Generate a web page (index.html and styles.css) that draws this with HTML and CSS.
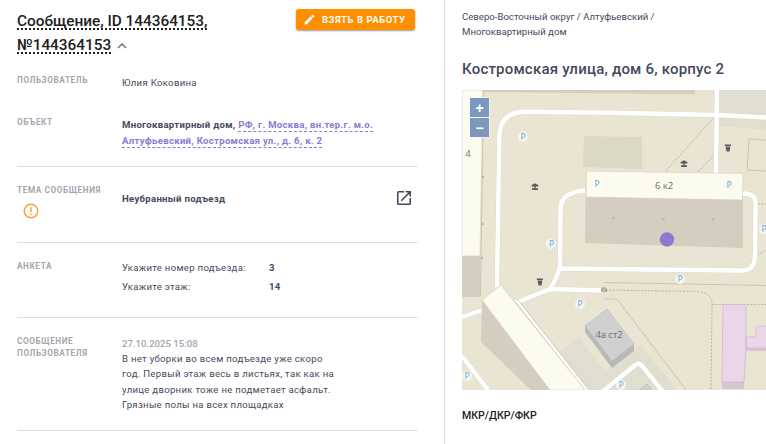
FILE: index.html
```html
<!DOCTYPE html>
<html lang="ru">
  <head>
    <meta charset="UTF-8" />
    <meta name="viewport" content="width=device-width, initial-scale=1.0" />
    <title>Сообщение, ID 144364153</title>
    <link rel="stylesheet" href="styles.css">
  </head>
  <body>
    <main class="page">
      <section class="message">
        <header class="message-header">
          <h1 class="message-title">
            <span>Сообщение, ID 144364153,<br>№144364153</span>
            <svg class="chevron" viewBox="0 0 10 6"><path d="M1 5 L5 1 L9 5" /></svg>
          </h1>
          <button class="take-button">
            <svg viewBox="0 0 24 24"><path d="M3 17.2V21h3.8L17.8 9.9l-3.7-3.7zM20.7 7a1 1 0 0 0 0-1.4l-2.3-2.3a1 1 0 0 0-1.4 0l-1.9 1.8 3.8 3.8z" /></svg>
            <span>Взять в работу</span>
          </button>
        </header>

        <div class="row row-user">
          <div class="label">Пользователь</div>
          <div class="value">Юлия Коковина</div>
        </div>
        <div class="row row-object">
          <div class="label">Объект</div>
          <div class="value strong">Многоквартирный дом, <a class="address" href="#">РФ, г. Москва, вн.тер.г. м.о.<br>Алтуфьевский, Костромская ул., д. 6, к. 2</a></div>
        </div>
        <div class="row row-theme">
          <div class="label">
            Тема сообщения
            <svg class="alert" viewBox="0 0 16 16"><circle cx="8" cy="8" r="6.8" /><path d="M8 4V9M8 10.4V12" /></svg>
          </div>
          <div class="value strong">Неубранный подъезд</div>
          <svg class="open" viewBox="3 3 18 18"><path d="M19 19H5V5h7V3H5a2 2 0 0 0-2 2v14a2 2 0 0 0 2 2h14a2 2 0 0 0 2-2v-7h-2zM14 3v2h3.6l-9.8 9.8 1.4 1.4L19 6.4V10h2V3z" /></svg>
        </div>
        <div class="row row-form">
          <div class="label">Анкета</div>
          <div class="value form">
            <span>Укажите номер подъезда:</span><b>3</b>
            <span>Укажите этаж:</span><b>14</b>
          </div>
        </div>
        <div class="row row-text">
          <div class="label">Сообщение<br>пользователя</div>
          <div class="value">
            <div class="date">27.10.2025 15:08</div>
            <div class="text">В нет уборки во всем подъезде уже скоро<br>год. Первый этаж весь в листьях, так как на<br>улице дворник тоже не подметает асфальт.<br>Грязные полы на всех площадках</div>
          </div>
        </div>
      </section>

      <aside class="place">
        <div class="crumbs">Северо-Восточный округ / Алтуфьевский /<br>Многоквартирный дом</div>
        <h2 class="place-title">Костромская улица, дом 6, корпус 2</h2>
        <div class="map">
          <svg class="map-canvas" viewBox="0 0 304 300">
            <defs>
              <g id="pavilion"><path d="M-3.500 -.5V-1.800L0 -3.800L3.500 -1.800V-.5zM-.7 -1H.7V2H-.7zM-3 1.200H3V3H-3z" /></g>
              <g id="bin"><path d="M-3.200 -3.500H3V-2H-3.200zM-2.500 -1.500H2.300L1.600 3.500H-1.400z" /></g>
            </defs>

            <!-- ground -->
            <path class="lawn" d="M257 0H304V40L257 36z" />
            <path class="lawn" d="M96 263L117 248L143 281L179 255L215 300H125z" />
            <path class="yard" d="M122 46L180 47V79L121 77z" />

            <!-- fences and footpaths -->
            <path class="fence" d="M304 50L287 49L285 80L304 81M142 192.500L304 195.500M142 209H155L224 300" />
            <path class="path" d="M252 27L203 82M252 65L236 82M296 114H304M295 165L304 160M144 200L236 201.500Q250 203 250 214L249 300M250 214.500H304" />

            <!-- roads -->
            <g class="road-edge">
              <path d="M35 197L37.300 47Q38 22 63 21.700L148 22.700L255 25L304 27.500M255 0L254 83M123 100.500Q98.500 102 98.500 119L98 177Q95 188 88 199L56 212M98 178.500L281 180.500Q293 180 293 165L293.700 113Q293 103 281 103.500M88 199L140 200.500M0 227L21 220M0 266L26 300M140 302L172 276Q177 271 181 277L201 302" />
            </g>
            <g class="road">
              <path d="M35 197L37.300 47Q38 22 63 21.700L148 22.700L255 25L304 27.500M255 0L254 83M123 100.500Q98.500 102 98.500 119L98 177Q95 188 88 199L56 212M98 178.500L281 180.500Q293 180 293 165L293.700 113Q293 103 281 103.500M88 199L140 200.500M0 227L21 220M0 266L26 300M140 302L172 276Q177 271 181 277L201 302" />
            </g>
            <path class="lane-edge" d="M54 210L125 300" />
            <path class="lane" d="M54 210L125 300" />

            <!-- buildings -->
            <path class="wall" d="M21 0H233V4.300L21 2zM0 166H18V207H0z" />
            <path class="roof" d="M0 0H21L18 166H0z" />
            <path class="edge" d="M21.500 0L18.500 206" />
            <path class="wall" d="M123.500 106L281 109V158L123 153zM20 210L88 300H69L19 252z" />
            <path class="roof" d="M124.500 81L281 83.500L280.500 110L124 107z" />
            <path class="roof" d="M20 210L39 195L123 300H88z" />
            <path class="wall-grey" d="M123 236V242L150 278L172 261V254z" />
            <path class="roof-grey" d="M123 236L145 219L172 254L150 271zM177 300L185 294L190 300z" />
            <path class="wall-pink" d="M260 291V299H282V291zM284 257V261H304V257z" />
            <path class="roof-pink" d="M261 214.500H284V247H294V238Q294 236 296 236H306V258H284L282 292H260z" />
            <path class="roof-line" d="M284 247V258" />
            <g class="entrance">
              <circle cx="21" cy="43" r="1.300" /><circle cx="21" cy="87" r="1.300" /><circle cx="20.500" cy="134" r="1.300" /><circle cx="20" cy="168" r="1.300" />
              <circle cx="151.500" cy="128" r="1.300" /><circle cx="201.500" cy="129" r="1.300" /><circle cx="251" cy="129.500" r="1.300" />
            </g>

            <!-- signs -->
            <g class="halo">
              <circle cx="61" cy="47" r="5" /><circle cx="267" cy="95" r="5" /><circle cx="302" cy="139" r="5" /><circle cx="89" cy="154" r="5" />
              <circle cx="118" cy="214" r="5" /><circle cx="5" cy="286" r="5" /><circle cx="218" cy="189" r="5" /><circle cx="159" cy="295" r="5" />
            </g>
            <g class="parking">
              <text x="61" y="50">P</text><text x="135" y="97">P</text><text x="267" y="98">P</text><text x="302" y="142">P</text><text x="89.500" y="157">P</text>
              <text x="118" y="217">P</text><text x="5" y="289">P</text><text x="218" y="192">P</text><text x="159" y="298">P</text>
            </g>
            <g class="sign">
              <use href="#pavilion" x="73" y="97" /><use href="#pavilion" x="222" y="74" />
              <use href="#bin" x="266" y="58" /><use href="#bin" x="78" y="192" />
            </g>
            <path class="gate" d="M139.700 202V199L141 197.500V202M144.300 202V199L143 197.500V202" />
            <g class="house">
              <text x="6" y="67">4</text><text x="202" y="99">6 к2</text><text x="147" y="248">4а ст2</text>
            </g>
            <circle class="pin" cx="205" cy="149.500" r="7.200" />
          </svg>
          <div class="zoom">
            <button>+</button>
            <button>−</button>
          </div>
        </div>
        <div class="tag">МКР/ДКР/ФКР</div>
      </aside>
    </main>
  </body>
</html>
```
FILE: styles.css
```css
:root {
  --text: #444a5c;
  --muted: #a3a6ae;
  --line: #dedede;
  --orange: #fe8f01;
  --purple: #8c7ad0;
}

* {
  box-sizing: border-box;
}

body {
  margin: 0;
  background: #fff;
  color: var(--text);
  font-family: Roboto, sans-serif;
  font-size: 9.6px;
  letter-spacing: 0.29px;
}

.page {
  display: grid;
  grid-template-columns: 445px 321px;
  height: 444px;
  overflow: hidden;
}

.message {
  padding: 9px 26px 0 17px;
  border-right: 1px solid var(--line);
}

.message-header {
  display: flex;
  justify-content: space-between;
  align-items: flex-start;
  height: 62px;
}

.message-title {
  margin: 0;
  color: #212121;
  font-size: 15.4px;
  font-weight: 500;
  line-height: 24px;
  letter-spacing: -0.03px;
  white-space: nowrap;
}

.message-title span {
  text-decoration: underline dotted 2px;
  text-underline-offset: 2px;
  text-decoration-skip-ink: none;
}

.chevron {
  width: 10px;
  height: 6px;
  margin-left: 2px;
  vertical-align: 1px;
  fill: none;
  stroke: #777;
  stroke-width: 1.5;
}

.take-button {
  display: flex;
  align-items: center;
  gap: 6px;
  width: 119px;
  height: 21px;
  margin-right: 3px;
  padding: 0 0 0 7px;
  border: 0;
  border-radius: 3px;
  background: var(--orange);
  box-shadow: 0 1px 2px rgba(0, 0, 0, 0.4);
  color: #fff;
  font: 700 9.5px Roboto, sans-serif;
  letter-spacing: 0.54px;
  text-transform: uppercase;
  white-space: nowrap;
}

.take-button svg {
  width: 13px;
  height: 13px;
  fill: #fff;
}

.row {
  display: grid;
  grid-template-columns: 105px 1fr auto;
  border-bottom: 1px solid var(--line);
}

.label {
  color: var(--muted);
  font-size: 8.2px;
  font-weight: 700;
  line-height: 12px;
  letter-spacing: 0.6px;
  text-transform: uppercase;
  white-space: nowrap;
}

.value {
  line-height: 16px;
}

.strong {
  font-weight: 700;
}

.row-user {
  height: 42px;
  padding-top: 3px;
  border: 0;
}

.row-user .value {
  padding-top: 1px;
}

.row-object {
  height: 54px;
  padding-top: 3px;
}

.row-object .value {
  padding-top: 1px;
}

.address {
  padding-bottom: 1px;
  border-bottom: 1px dashed var(--purple);
  color: var(--purple);
  text-decoration: none;
}

.row-theme {
  height: 76px;
  padding-top: 17px;
}

.row-theme .value {
  padding-top: 7px;
}

.alert {
  display: block;
  width: 16px;
  height: 16px;
  margin: 6.5px 0 0 5.5px;
  fill: none;
  stroke: #ff9c33;
  stroke-width: 1.4;
}

.open {
  width: 14px;
  height: 14px;
  margin: 7px 7px 0 0;
  fill: var(--text);
}

.row-form {
  height: 75px;
  padding-top: 17px;
}

.form {
  display: grid;
  grid-template-columns: 147px auto;
  align-content: start;
  row-gap: 3px;
}

.row-text {
  height: 113px;
  padding-top: 17px;
}

.row-text .value {
  padding-top: 1px;
}

.date {
  color: var(--muted);
  font-weight: 500;
  line-height: 15px;
  letter-spacing: 0;
}

.text {
  line-height: 15.3px;
}

.place {
  padding: 9px 0 0 17px;
}

.crumbs {
  line-height: 15px;
  letter-spacing: 0;
}

.place-title {
  margin: 20px 0 11px;
  font-size: 15px;
  font-weight: 500;
  line-height: 20px;
  letter-spacing: 0.2px;
  white-space: nowrap;
}

.map {
  position: relative;
  width: 304px;
  height: 300px;
  background: #e9e5d2;
}

.map-canvas {
  display: block;
  width: 304px;
  height: 300px;
  fill: none;
}

/* zoom control lies over the map */
.zoom {
  position: absolute;
  top: 7px;
  left: 7px;
  display: grid;
  gap: 1px;
  padding: 1px;
  border-radius: 2px;
  background: rgba(255, 255, 255, 0.5);
}

.zoom button {
  width: 19px;
  height: 19px;
  padding: 0;
  border: 0;
  background: #7c98bf;
  color: #fff;
  font: 700 14px/18px "Liberation Sans", sans-serif;
}

.tag {
  margin-top: 18px;
  color: #212121;
  font-size: 10.6px;
  font-weight: 500;
  line-height: 16px;
  letter-spacing: 0;
}

.lawn {
  fill: #e0dfcf;
}

.yard {
  fill: #dbd8c4;
}

.fence {
  stroke: #c8c6b8;
}

.path {
  stroke: #bbb5a2;
  stroke-dasharray: 2 1.5;
}

.road-edge {
  stroke: #dfdccb;
  stroke-width: 5.6;
}

.road {
  stroke: #fff;
  stroke-width: 4.4;
}

.lane-edge {
  stroke: #ccc8b9;
  stroke-width: 4;
}

.lane {
  stroke: #fff;
  stroke-width: 2.6;
}

.wall {
  fill: #d5cdc0;
}

.roof {
  fill: #fbfbf0;
  stroke: #d9d2c2;
  stroke-width: 0.7;
}

.edge {
  stroke: #cbc3b3;
}

.wall-grey {
  fill: #b9b8b7;
}

.roof-grey {
  fill: #d0d0d0;
  stroke: #bbb;
  stroke-width: 0.6;
}

.wall-pink {
  fill: #d5c5d2;
}

.roof-pink {
  fill: #e9d7e9;
  stroke: #cdb5cf;
  stroke-width: 0.7;
}

.roof-line {
  stroke: #c5abc8;
}

.entrance {
  fill: #beb7a9;
}

.halo {
  fill: #f7f5ee;
}

.parking {
  fill: #5cabe0;
  font: 8.500px "Noto Sans", sans-serif;
  letter-spacing: 0;
  text-anchor: middle;
}

.sign {
  fill: #5b5b60;
}

.gate {
  stroke: #968c80;
}

.house {
  fill: #77756f;
  font: 9.5px "Noto Sans", sans-serif;
  letter-spacing: -0.1px;
  text-anchor: middle;
}

.pin {
  fill: var(--purple);
}
```
